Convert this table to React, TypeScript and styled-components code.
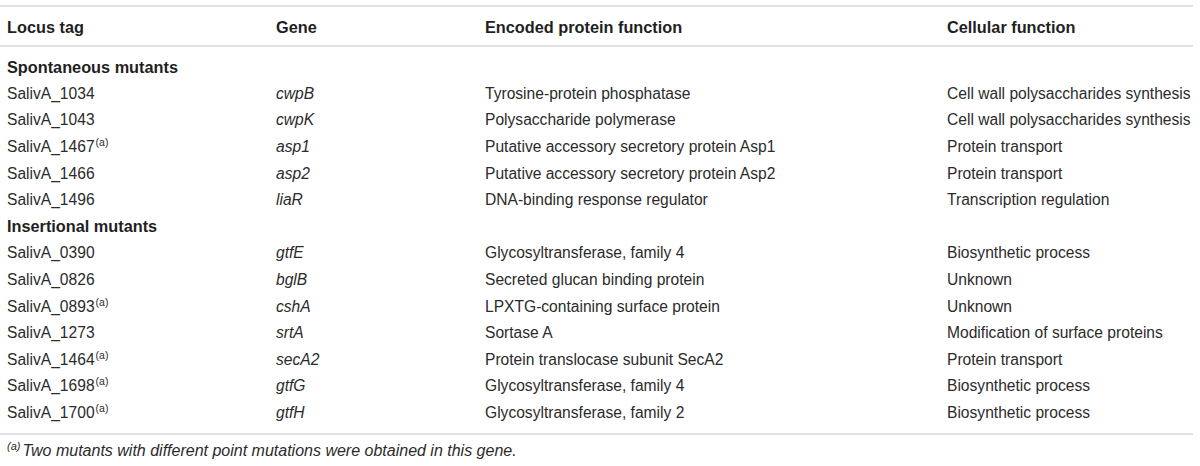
import React from "react";
import styled, { createGlobalStyle } from "styled-components";

const Global = createGlobalStyle`
  html, body { margin: 0; padding: 0; background: #fff; }
  body { font-family: "Liberation Sans", Arial, Helvetica, sans-serif; color: #2b2b2b; }
`;

const Wrap = styled.div`
  width: 1193px;
  padding-top: 5px;
`;

const Table = styled.div`
  border-top: 2px solid #e2e2e2;
  border-bottom: 2px solid #e2e2e2;
`;

const Grid = styled.div<{ $h: number }>`
  display: grid;
  grid-template-columns: 269px 209px 462px 1fr;
  padding-left: 7px;
  height: ${(p) => p.$h}px;
  align-items: center;
  font-size: 15.6px;
  white-space: nowrap;
`;

const HeadRow = styled(Grid)`
  font-weight: bold;
  font-size: 16.3px;
  color: #1f1f1f;
  border-bottom: 2px solid #e2e2e2;
  padding-top: 2px;
  box-sizing: border-box;
`;

const Body = styled.div`
  padding: 7px 0 7px;
`;

const Section = styled.div`
  height: 26.6px;
  display: flex;
  align-items: center;
  padding-left: 7px;
  font-size: 16.3px;
  font-weight: bold;
  color: #1f1f1f;
`;

const Cell = styled.span<{ $italic?: boolean }>`
  font-style: ${(p) => (p.$italic ? "italic" : "normal")};
`;

const Sup = styled.sup`
  font-size: 10.5px;
  line-height: 0;
  vertical-align: 6px;
  margin-left: 1px;
`;

const Foot = styled.div`
  padding: 7px 0 0 7px;
  font-size: 16px;
  font-style: italic;
  color: #2b2b2b;
`;

const FootSup = styled.sup`
  font-size: 11px;
  line-height: 0;
  vertical-align: 6px;
  margin-right: 2px;
`;

type Row = [string, boolean, string, string, string];

const spont: Row[] = [
  ["SalivA_1034", false, "cwpB", "Tyrosine-protein phosphatase", "Cell wall polysaccharides synthesis"],
  ["SalivA_1043", false, "cwpK", "Polysaccharide polymerase", "Cell wall polysaccharides synthesis"],
  ["SalivA_1467", true, "asp1", "Putative accessory secretory protein Asp1", "Protein transport"],
  ["SalivA_1466", false, "asp2", "Putative accessory secretory protein Asp2", "Protein transport"],
  ["SalivA_1496", false, "liaR", "DNA-binding response regulator", "Transcription regulation"],
];

const insert: Row[] = [
  ["SalivA_0390", false, "gtfE", "Glycosyltransferase, family 4", "Biosynthetic process"],
  ["SalivA_0826", false, "bglB", "Secreted glucan binding protein", "Unknown"],
  ["SalivA_0893", true, "cshA", "LPXTG-containing surface protein", "Unknown"],
  ["SalivA_1273", false, "srtA", "Sortase A", "Modification of surface proteins"],
  ["SalivA_1464", true, "secA2", "Protein translocase subunit SecA2", "Protein transport"],
  ["SalivA_1698", true, "gtfG", "Glycosyltransferase, family 4", "Biosynthetic process"],
  ["SalivA_1700", true, "gtfH", "Glycosyltransferase, family 2", "Biosynthetic process"],
];

const DataRow = ({ r }: { r: Row }) => (
  <Grid $h={26.6}>
    <Cell>
      {r[0]}
      {r[1] && <Sup>(a)</Sup>}
    </Cell>
    <Cell $italic>{r[2]}</Cell>
    <Cell>{r[3]}</Cell>
    <Cell>{r[4]}</Cell>
  </Grid>
);

export default function App() {
  return (
    <>
      <Global />
      <Wrap>
        <Table>
          <HeadRow $h={40}>
            <Cell>Locus tag</Cell>
            <Cell>Gene</Cell>
            <Cell>Encoded protein function</Cell>
            <Cell>Cellular function</Cell>
          </HeadRow>
          <Body>
            <Section>Spontaneous mutants</Section>
            {spont.map((r) => (
              <DataRow key={r[0]} r={r} />
            ))}
            <Section>Insertional mutants</Section>
            {insert.map((r) => (
              <DataRow key={r[0]} r={r} />
            ))}
          </Body>
        </Table>
        <Foot>
          <FootSup>(a)</FootSup>Two mutants with different point mutations were obtained in this gene.
        </Foot>
      </Wrap>
    </>
  );
}
